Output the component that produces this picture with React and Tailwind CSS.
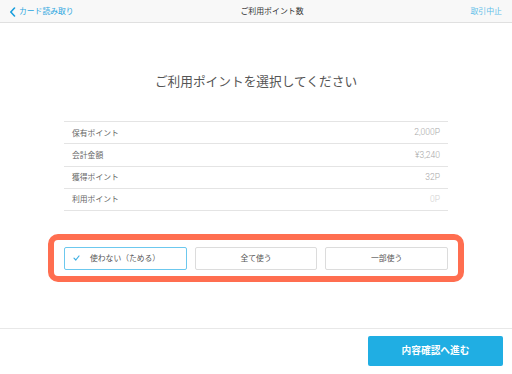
import React from "react";

const rows = [
  { label: "保有ポイント", value: "2,000P", vc: "text-[#a8a8a8]" },
  { label: "会計金額", value: "¥3,240", vc: "text-[#a8a8a8]" },
  { label: "獲得ポイント", value: "32P", vc: "text-[#a8a8a8]" },
  { label: "利用ポイント", value: "0P", vc: "text-[#d0d0d0]" },
];

export default function App() {
  return (
    <div
      className="w-[512px] h-[374px] bg-white flex flex-col overflow-hidden"
      style={{ fontFamily: '"Noto Sans CJK JP", "Noto Sans", sans-serif' }}
    >
      <header className="h-[23px] shrink-0 bg-[#f8f8f8] border-b border-[#e0e0e0] flex items-center justify-between pl-[9px] pr-[10px]">
        <div className="flex items-center gap-[3px] text-[#2aa6e0] text-[7.8px] leading-none">
          <svg width="7" height="10" viewBox="0 0 7 10" className="mt-[1px]">
            <path d="M5.5 1 L1.8 5 L5.5 9" fill="none" stroke="#1a9fdd" strokeWidth="1.6" strokeLinecap="round" strokeLinejoin="round" />
          </svg>
          <span>カード読み取り</span>
        </div>
        <div className="text-[7.9px] text-[#333] leading-none">ご利用ポイント数</div>
        <div className="text-[7.9px] text-[#62bfe9] leading-none">取引中止</div>
      </header>

      <main className="flex-1 flex flex-col items-center">
        <h1 className="mt-[50px] text-[12.7px] leading-[16px] text-[#555] font-normal">
          ご利用ポイントを選択してください
        </h1>
        <div className="mt-[32px] w-[384px] border-t border-[#e4e4e4]">
          {rows.map((r) => (
            <div
              key={r.label}
              className="h-[22.25px] border-b border-[#e4e4e4] flex items-center justify-between px-[8px] text-[7.8px] leading-none"
            >
              <span className="text-[#666]">{r.label}</span>
              <span
                className={`${r.vc} font-light text-[8.5px]`}
                style={{ fontFamily: 'Roboto, "Noto Sans CJK JP", sans-serif' }}
              >
                {r.value}
              </span>
            </div>
          ))}
        </div>
        <div className="mt-[23px] w-[416px] h-[48px] border-[6px] border-[#ff6e50] rounded-[10px] px-[10px] flex items-center gap-[8px]">
          <button className="flex-1 h-[23px] border border-[#6cc8ee] rounded-[2px] flex items-center text-[7.8px] text-[#555] leading-none">
            <svg width="7" height="6" viewBox="0 0 7 6" className="ml-[8px]">
              <path d="M1 3.2 L2.8 5 L6 1" fill="none" stroke="#3aaee2" strokeWidth="1.2" strokeLinecap="round" strokeLinejoin="round" />
            </svg>
            <span className="ml-[10px]">使わない（ためる）</span>
          </button>
          <button className="flex-1 h-[23px] border border-[#dcdcdc] rounded-[2px] flex items-center justify-center text-[7.8px] text-[#555] leading-none">
            全て使う
          </button>
          <button className="flex-1 h-[23px] border border-[#dcdcdc] rounded-[2px] flex items-center justify-center text-[7.8px] text-[#555] leading-none">
            一部使う
          </button>
        </div>
      </main>

      <footer className="h-[46px] shrink-0 border-t border-[#e8e8e8] flex justify-end items-start pt-[7px] pr-[9px]">
        <button className="w-[135px] h-[30px] bg-[#20aee3] rounded-[2px] text-white text-[9.7px] font-bold leading-none flex items-center justify-center">
          内容確認へ進む
        </button>
      </footer>
    </div>
  );
}
